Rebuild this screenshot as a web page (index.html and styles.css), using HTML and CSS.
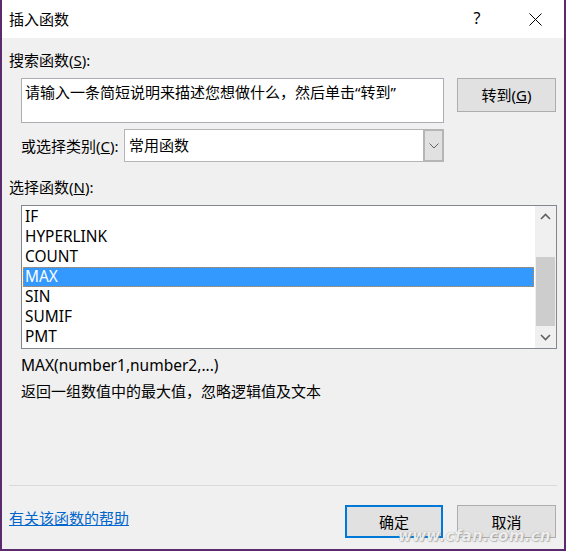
FILE: index.html
```html
<!DOCTYPE html>
<html lang="zh-CN">
<head>
<meta charset="utf-8">
<title>插入函数</title>
<link rel="stylesheet" href="styles.css">
</head>
<body>
<div class="window">
  <div class="titlebar">
    <span class="title">插入函数</span>
    <span class="tb-btn help">?</span>
    <span class="tb-btn close"><svg width="13" height="13" viewBox="0 0 13 13"><path d="M0.5 0.5L12.5 12.5M12.5 0.5L0.5 12.5" stroke="#000" stroke-width="1" fill="none"/></svg></span>
  </div>
  <div class="body">
    <div class="label lbl-search">搜索函数(<u>S</u>):</div>
    <div class="search-row">
      <div class="search-box">请输入一条简短说明来描述您想做什么，然后单击“转到”</div>
      <div class="btn go">转到(<u>G</u>)</div>
    </div>
    <div class="cat-row">
      <span class="label cat-label">或选择类别(<u>C</u>):</span>
      <div class="combo">
        <span class="combo-text">常用函数</span>
        <span class="combo-btn"><svg width="10" height="6" viewBox="0 0 10 6"><path d="M0.5 0.5L5 5L9.5 0.5" stroke="#606060" stroke-width="1" fill="none"/></svg></span>
      </div>
    </div>
    <div class="label lbl-fn">选择函数(<u>N</u>):</div>
    <div class="list">
      <ul class="items">
        <li>IF</li>
        <li>HYPERLINK</li>
        <li>COUNT</li>
        <li class="sel">MAX</li>
        <li>SIN</li>
        <li>SUMIF</li>
        <li>PMT</li>
      </ul>
      <div class="scrollbar">
        <div class="sb-arrow"><svg width="11" height="7" viewBox="0 0 11 7"><path d="M1 6L5.5 1.5L10 6" stroke="#606060" stroke-width="1.6" fill="none"/></svg></div>
        <div class="sb-track"><div class="sb-thumb"></div></div>
        <div class="sb-arrow"><svg width="11" height="7" viewBox="0 0 11 7"><path d="M1 1L5.5 5.5L10 1" stroke="#606060" stroke-width="1.6" fill="none"/></svg></div>
      </div>
    </div>
    <div class="syntax">MAX(number1,number2,...)</div>
    <div class="desc">返回一组数值中的最大值，忽略逻辑值及文本</div>
    <div class="sep"></div>
    <div class="footer">
      <a class="help-link" href="#">有关该函数的帮助</a>
      <div class="btn ok">确定</div>
      <div class="btn cancel">取消</div>
    </div>
  </div>
  <div class="watermark">www.cfan.com.cn</div>
</div>
</body>
</html>
```
FILE: styles.css
```css
* { box-sizing: border-box; }
html, body { margin: 0; padding: 0; }
body {
  font-family: "Noto Sans", "Noto Sans CJK SC", sans-serif;
  font-size: 15px;
  color: #000;
  background: #f0f0f0;
}
.window {
  position: relative;
  width: 566px;
  height: 551px;
  background: #f0f0f0;
  border: 2px solid #5a2a6c;
  border-top: 0;
  display: flex;
  flex-direction: column;
  overflow: hidden;
}
.titlebar {
  height: 38px;
  background: #fff;
  display: flex;
  align-items: center;
  padding-left: 7px;
  flex: none;
}
.title { flex: 1; line-height: 20px; margin-top: -1px; }
.tb-btn {
  width: 30px;
  display: flex;
  justify-content: center;
  align-items: center;
}
.help { font-size: 16px; margin-top: -2px; }
.close { margin-left: 28px; margin-right: 14px; }
.body {
  flex: 1;
  display: flex;
  flex-direction: column;
  padding: 0 7px;
}
.label { line-height: 20px; height: 20px; white-space: nowrap; }
.lbl-search { margin-top: 12px; }
.search-row {
  margin-top: 8px;
  margin-left: 12px;
  display: flex;
  align-items: flex-start;
}
.search-box {
  width: 423px;
  height: 45px;
  background: #fff;
  border: 1px solid #abadb3;
  padding: 3px 0 0 3px;
  line-height: 20px;
  white-space: nowrap;
}
.btn {
  background: #e1e1e1;
  border: 1px solid #adadad;
  display: flex;
  align-items: center;
  justify-content: center;
  line-height: 20px;
}
.go {
  margin-left: 13px;
  width: 99px;
  height: 34px;
}
.cat-row {
  margin-top: 6px;
  margin-left: 12px;
  height: 33px;
  display: flex;
  align-items: center;
}
.cat-label { width: 103px; }
.combo {
  width: 320px;
  height: 33px;
  background: #fff;
  border: 1px solid #b5b5b5;
  display: flex;
  align-items: stretch;
}
.combo-text { flex: 1; padding-left: 4px; line-height: 31px; }
.combo-btn {
  width: 21px;
  margin: -1px -1px -1px 0;
  background: #e1e1e1;
  border: 2px solid #b5b5b5;
  display: flex;
  align-items: center;
  justify-content: center;
}
.lbl-fn { margin-top: 15px; }
.list {
  margin-top: 8px;
  margin-left: 12px;
  width: 536px;
  height: 144px;
  background: #fff;
  border: 1px solid #828790;
  display: flex;
}
.items {
  list-style: none;
  margin: 0;
  padding: 1px 1px 0 1px;
  flex: 1;
  font-size: 15.4px;
}
.items li {
  height: 20px;
  line-height: 20px;
  padding-left: 2px;
}
.items li.sel {
  background: #3399ff;
  color: #fff;
  outline: 1px dotted #e8861a;
  outline-offset: -1px;
}
.scrollbar {
  width: 21px;
  background: #f0f0f0;
  display: flex;
  flex-direction: column;
}
.sb-arrow {
  height: 21px;
  display: flex;
  align-items: center;
  justify-content: center;
}
.sb-track { flex: 1; }
.sb-thumb {
  margin-top: 30px;
  height: 69px;
  margin-left: 1px;
  margin-right: 1px;
  background: #cdcdcd;
}
.syntax { margin-top: 6px; margin-left: 12px; line-height: 20px; font-size: 15.5px; }
.desc { margin-top: 6px; margin-left: 12px; line-height: 20px; }
.sep {
  margin-top: 84px;
  height: 1px;
  background: #dadada;
}
.footer {
  margin-top: 19px;
  display: flex;
  align-items: flex-start;
}
.help-link {
  color: #0066cc;
  text-decoration: underline;
  line-height: 20px;
  margin-top: 3px;
  white-space: nowrap;
}
.ok {
  margin-left: auto;
  width: 98px;
  height: 33px;
  border: 2px solid #0078d7;
}
.cancel {
  margin-left: 14px;
  margin-right: 1px;
  width: 99px;
  height: 33px;
}
.watermark {
  position: absolute;
  left: 396px;
  top: 527px;
  font-family: "DejaVu Sans", sans-serif;
  font-style: italic;
  font-weight: bold;
  font-size: 15px;
  line-height: 18px;
  letter-spacing: 0.3px;
  white-space: nowrap;
  color: rgba(255, 255, 255, 0.85);
  text-shadow: 0 0 1px rgba(120,120,120,0.7), 1px 1px 1px rgba(150,150,150,0.6);
  pointer-events: none;
}
```
